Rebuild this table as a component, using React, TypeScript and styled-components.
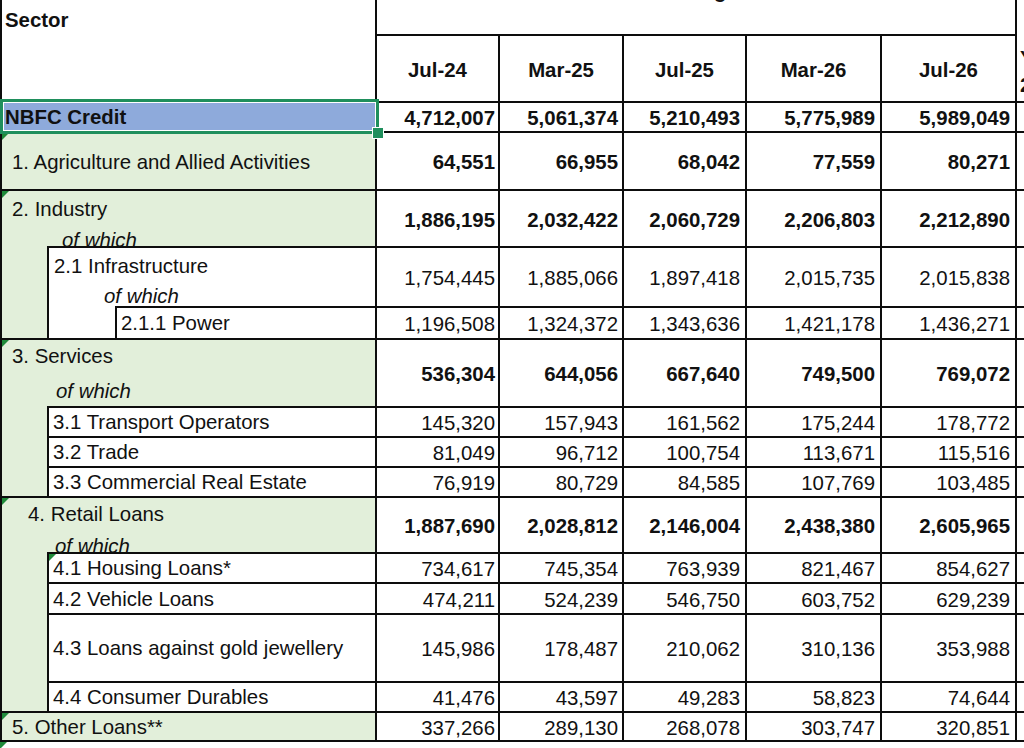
import React from 'react';
import styled, { createGlobalStyle, css } from 'styled-components';

const LINE = '#0d0d0d';
const GREEN = '#e2efda';
const BLUE = '#8eaadb';
const SELECT = '#1f8f5c';
const MARK = '#1f8a3a';

const GlobalStyle = createGlobalStyle`
  html, body { margin: 0; padding: 0; background: #fff; overflow: hidden; }
  body {
    font-family: "Liberation Sans", Arial, Helvetica, sans-serif;
    color: #111;
    font-size: 20.4px;
  }
`;

const Viewport = styled.div`
  width: 1024px;
  height: 748px;
  overflow: hidden;
`;

const Sheet = styled.div`
  margin-top: -24px;
  display: grid;
  grid-template-columns: 375px 123px 124px 123px 135px 135px 123px;
  grid-template-rows: 60px 67px 30px 58px 57px 60px 32px 68px 30px 30px 30px 56px 30px 31px 68px 30px 29px;
  width: max-content;
  border-left: 2px solid ${LINE};
  font-size: 20.4px;
`;

const Cell = styled.div`
  box-sizing: border-box;
  border-right: 2px solid ${LINE};
  border-bottom: 2px solid ${LINE};
  min-width: 0;
  min-height: 0;
`;

const SectorHead = styled(Cell)`
  grid-column: 1;
  grid-row: 1 / span 2;
  font-weight: 700;
  line-height: 22px;
  padding: 33px 0 0 3px;
`;

const TitleHead = styled(Cell)`
  grid-column: 2 / span 5;
  grid-row: 1;
  font-weight: 700;
  line-height: 22px;
  text-align: center;
  padding-top: 4px;
  white-space: nowrap;
`;

const ExtraHead = styled(Cell)`
  grid-column: 7;
  grid-row: 1 / span 2;
  font-weight: 700;
  line-height: 27px;
  padding: 69px 0 0 3px;
  white-space: nowrap;
`;

const DateCell = styled(Cell)`
  display: flex;
  align-items: center;
  justify-content: center;
  padding-top: 4px;
  font-weight: 700;
`;

const NumCell = styled(Cell)<{ $bold?: boolean; $pad?: number }>`
  display: flex;
  align-items: center;
  justify-content: flex-end;
  padding: 3px ${p => p.$pad ?? 5}px 0 0;
  font-weight: ${p => (p.$bold ? 700 : 400)};
  white-space: nowrap;
`;

const Triangle = css`
  &::before {
    content: '';
    position: absolute;
    left: 0;
    top: 0;
    z-index: 1;
    border-top: 7px solid ${MARK};
    border-right: 7px solid transparent;
  }
`;

const LabelCell = styled(Cell)<{ $row: number; $span?: number; $mark?: boolean }>`
  grid-column: 1;
  grid-row: ${p => p.$row} / span ${p => p.$span ?? 1};
  background: ${GREEN};
  position: relative;
  white-space: nowrap;
  ${p => p.$mark && Triangle}
`;

const PlainLabel = styled(LabelCell)`
  display: flex;
  align-items: center;
  padding: 2px 0 0 10px;
`;

const SelectedLabel = styled(LabelCell)`
  background: ${BLUE};
  font-weight: 700;
  display: flex;
  align-items: center;
  padding: 1px 0 0 3px;
`;

const SelectionFrame = styled.div`
  position: absolute;
  left: -2px;
  top: -4px;
  right: -4px;
  bottom: -3px;
  border: 3px solid ${SELECT};
  box-shadow: inset 0 0 0 1px #fff;
  z-index: 2;
  pointer-events: none;
`;

const FillHandle = styled.div`
  position: absolute;
  right: -9px;
  bottom: -8px;
  width: 12px;
  height: 12px;
  box-sizing: border-box;
  background: ${SELECT};
  border: 1px solid #fff;
  z-index: 3;
`;

const GroupCell = styled(LabelCell)`
  display: flex;
  flex-direction: column;
`;

const GroupHead = styled.div<{ $h: number; $pt: number }>`
  flex: 0 0 ${p => p.$h}px;
  min-height: 0;
  height: ${p => p.$h}px;
  box-sizing: border-box;
  padding-top: ${p => p.$pt}px;
`;

const TitleLine = styled.div<{ $indent: number }>`
  line-height: 22px;
  padding-left: ${p => p.$indent}px;
`;

const WhichLine = styled.div<{ $indent: number; $gap: number }>`
  line-height: 22px;
  font-style: italic;
  padding-left: ${p => p.$indent}px;
  margin-top: ${p => p.$gap}px;
`;

const SubBox = styled.div<{ $h?: number; $offset: number; $mark?: boolean }>`
  box-sizing: border-box;
  min-height: 0;
  margin-left: ${p => p.$offset}px;
  border-top: 2px solid ${LINE};
  border-left: 2px solid ${LINE};
  background: #fff;
  position: relative;
  flex: ${p => (p.$h ? `0 0 ${p.$h}px` : '1 1 auto')};
  ${p => p.$mark && Triangle}
`;

const NestedBox = styled(SubBox)`
  display: flex;
  flex-direction: column;
`;

const NestedText = styled.div<{ $h: number; $pt: number }>`
  flex: 0 0 ${p => p.$h}px;
  min-height: 0;
  height: ${p => p.$h}px;
  box-sizing: border-box;
  padding-top: ${p => p.$pt}px;
`;

const SubRow = styled(SubBox)`
  display: flex;
  align-items: center;
  padding: 1px 0 0 4px;
`;

const TailMark = styled.div`
  position: relative;
  height: 6px;
  width: 10px;
  ${Triangle}
`;

type Row = { bold?: boolean; v: string[] };

const rows: Row[] = [
  { bold: true, v: ['4,712,007', '5,061,374', '5,210,493', '5,775,989', '5,989,049'] },
  { bold: true, v: ['64,551', '66,955', '68,042', '77,559', '80,271'] },
  { bold: true, v: ['1,886,195', '2,032,422', '2,060,729', '2,206,803', '2,212,890'] },
  { v: ['1,754,445', '1,885,066', '1,897,418', '2,015,735', '2,015,838'] },
  { v: ['1,196,508', '1,324,372', '1,343,636', '1,421,178', '1,436,271'] },
  { bold: true, v: ['536,304', '644,056', '667,640', '749,500', '769,072'] },
  { v: ['145,320', '157,943', '161,562', '175,244', '178,772'] },
  { v: ['81,049', '96,712', '100,754', '113,671', '115,516'] },
  { v: ['76,919', '80,729', '84,585', '107,769', '103,485'] },
  { bold: true, v: ['1,887,690', '2,028,812', '2,146,004', '2,438,380', '2,605,965'] },
  { v: ['734,617', '745,354', '763,939', '821,467', '854,627'] },
  { v: ['474,211', '524,239', '546,750', '603,752', '629,239'] },
  { v: ['145,986', '178,487', '210,062', '310,136', '353,988'] },
  { v: ['41,476', '43,597', '49,283', '58,823', '74,644'] },
  { v: ['337,266', '289,130', '268,078', '303,747', '320,851'] },
];

const dates = ['Jul-24', 'Mar-25', 'Jul-25', 'Mar-26', 'Jul-26'];
const colPad = [3, 4, 5, 5, 5];

export default function App() {
  return (
    <>
      <GlobalStyle />
      <Viewport>
        <Sheet>
          <SectorHead>Sector</SectorHead>
          <TitleHead>Outstanding as on</TitleHead>
          <ExtraHead>
            Y-o-Y
            <br />
            2026
          </ExtraHead>
          {dates.map(d => (
            <DateCell key={d}>{d}</DateCell>
          ))}

          <SelectedLabel $row={3}>
            NBFC Credit
            <SelectionFrame />
            <FillHandle />
          </SelectedLabel>

          <PlainLabel $row={4} $mark>
            1. Agriculture and Allied Activities
          </PlainLabel>

          <GroupCell $row={5} $span={3} $mark>
            <GroupHead $h={55} $pt={7}>
              <TitleLine $indent={10}>2. Industry</TitleLine>
              <WhichLine $indent={60} $gap={9}>
                of which
              </WhichLine>
            </GroupHead>
            <NestedBox $offset={45}>
              <NestedText $h={58} $pt={7}>
                <TitleLine $indent={5}>2.1 Infrastructure</TitleLine>
                <WhichLine $indent={55} $gap={8}>
                  of which
                </WhichLine>
              </NestedText>
              <SubRow $offset={66}>2.1.1 Power</SubRow>
            </NestedBox>
          </GroupCell>

          <GroupCell $row={8} $span={4} $mark>
            <GroupHead $h={66} $pt={5}>
              <TitleLine $indent={10}>3. Services</TitleLine>
              <WhichLine $indent={54} $gap={13}>
                of which
              </WhichLine>
            </GroupHead>
            <SubRow $offset={45} $h={30}>3.1 Transport Operators</SubRow>
            <SubRow $offset={45} $h={30}>3.2 Trade</SubRow>
            <SubRow $offset={45} $h={30}>3.3 Commercial Real Estate</SubRow>
          </GroupCell>

          <GroupCell $row={12} $span={5} $mark>
            <GroupHead $h={54} $pt={5}>
              <TitleLine $indent={26}>4. Retail Loans</TitleLine>
              <WhichLine $indent={53} $gap={10}>
                of which
              </WhichLine>
            </GroupHead>
            <SubRow $offset={45} $h={30} $mark>4.1 Housing Loans*</SubRow>
            <SubRow $offset={45} $h={31}>4.2 Vehicle Loans</SubRow>
            <SubRow $offset={45} $h={68}>4.3 Loans against gold jewellery</SubRow>
            <SubRow $offset={45} $h={30}>4.4 Consumer Durables</SubRow>
          </GroupCell>

          <PlainLabel $row={17} $mark>
            5. Other Loans**
          </PlainLabel>

          {rows.map((r, i) => (
            <React.Fragment key={i}>
              {r.v.map((val, j) => (
                <NumCell key={j} $bold={r.bold} $pad={colPad[j]}>
                  {val}
                </NumCell>
              ))}
              <NumCell />
            </React.Fragment>
          ))}
        </Sheet>
        <TailMark />
      </Viewport>
    </>
  );
}
